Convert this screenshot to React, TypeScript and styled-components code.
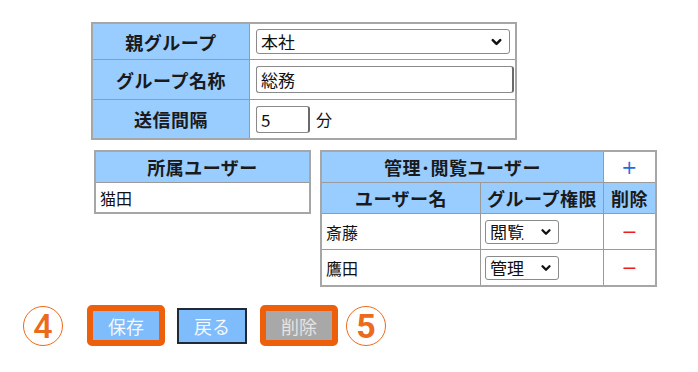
import React from "react";
import styled, { createGlobalStyle } from "styled-components";
import { ChevronDown } from "lucide-react";

const GlobalStyle = createGlobalStyle`
  html, body {
    margin: 0;
    padding: 0;
    background: #ffffff;
  }
  body {
    font-family: "Noto Sans CJK JP", "Noto Sans", sans-serif;
    color: #111;
  }
`;

const Page = styled.div`
  width: 698px;
  height: 372px;
  padding: 22px 0 0 91px;
  box-sizing: border-box;
`;

const FormTable = styled.table`
  border-collapse: collapse;
  border: 2px solid #a6a6a6;
  width: 426px;
`;

const LabelCell = styled.th<{ $h: number }>`
  width: 156px;
  height: ${(p) => p.$h}px;
  padding: 0;
  background: #99ccff;
  border: 1px solid #9a9a9a;
  font-size: 18px;
  letter-spacing: 0.5px;
  font-weight: bold;
  line-height: 1;
  color: #1a1a1a;
  text-align: center;
`;

const ValueCell = styled.td`
  padding: 0 0 0 6px;
  border: 1px solid #9a9a9a;
  font-size: 16px;
  line-height: 1;
`;

const SelectWrap = styled.div<{ $w: number }>`
  position: relative;
  width: ${(p) => p.$w}px;
  display: inline-block;
  vertical-align: middle;
`;

const Select = styled.select<{ $h: number }>`
  appearance: none;
  display: block;
  width: 100%;
  height: ${(p) => p.$h}px;
  box-sizing: border-box;
  border: 1px solid #8a8a8a;
  border-radius: 3px;
  background: #fff;
  padding: 0 0 0 4px;
  font-family: "Noto Sans CJK JP", sans-serif;
  font-size: 17px;
  line-height: 1;
  color: #111;
`;

const Chevron = styled(ChevronDown)`
  position: absolute;
  right: 6px;
  top: 50%;
  transform: translateY(-50%);
  pointer-events: none;
  color: #111;
`;

const TextInput = styled.input<{ $w: number }>`
  width: ${(p) => p.$w}px;
  height: 27px;
  box-sizing: border-box;
  border: 1px solid #8a8a8a;
  border-right: 2px solid #6a6a6a;
  border-radius: 3px;
  padding: 0 4px;
  font-family: "Noto Sans CJK JP", "Liberation Sans", sans-serif;
  font-size: 17px;
  color: #111;
  vertical-align: middle;
`;

const Unit = styled.span`
  margin-left: 6px;
  font-size: 16px;
  vertical-align: middle;
`;

const LowerRow = styled.div`
  display: flex;
  align-items: flex-start;
  gap: 9px;
  margin: 10px 0 0 3px;
`;

const ListTable = styled.table<{ $w: number }>`
  border-collapse: collapse;
  border: 2px solid #a6a6a6;
  width: ${(p) => p.$w}px;
`;

const HeadCell = styled.th<{ $h?: number; $w?: number; $plain?: boolean }>`
  height: ${(p) => p.$h ?? 30}px;
  width: ${(p) => (p.$w ? `${p.$w}px` : "auto")};
  padding: 0;
  background: ${(p) => (p.$plain ? "#ffffff" : "#99ccff")};
  border: 1px solid #9a9a9a;
  font-size: 18px;
  letter-spacing: 0.5px;
  font-weight: bold;
  line-height: 1;
  color: #1a1a1a;
  text-align: center;
  white-space: nowrap;
`;

const BodyCell = styled.td<{ $h: number; $center?: boolean }>`
  height: ${(p) => p.$h}px;
  padding: 0 0 0 ${(p) => (p.$center ? 0 : 4)}px;
  border: 1px solid #9a9a9a;
  font-size: 16px;
  line-height: 1;
  text-align: ${(p) => (p.$center ? "center" : "left")};
  white-space: nowrap;
`;

const Sign = styled.span<{ $color: string }>`
  color: ${(p) => p.$color};
  font-family: "DejaVu Sans", sans-serif;
  font-size: 19px;
  font-weight: normal;
  line-height: 1;
`;

const ButtonBar = styled.div`
  display: flex;
  align-items: center;
  margin: 18px 0 0 -68px;
`;

const Marker = styled.div<{ $bold?: boolean }>`
  width: 38px;
  height: 38px;
  border: 1.5px solid #ec6a1c;
  border-radius: 50%;
  display: flex;
  align-items: center;
  justify-content: center;
  color: #ec6a1c;
  font-family: Roboto, "Liberation Sans", sans-serif;
  font-size: 34px;
  font-weight: ${(p) => (p.$bold ? 700 : 500)};
  line-height: 1;
`;

const Highlight = styled.div`
  border: 6px solid #ee5f0c;
  border-radius: 5px;
  display: flex;
`;

const Button = styled.button<{ $tone: "blue" | "gray"; $framed?: boolean }>`
  width: ${(p) => (p.$framed ? 70 : 66)}px;
  height: ${(p) => (p.$framed ? 36 : 29)}px;
  box-sizing: border-box;
  border: ${(p) => (p.$framed ? "2px solid #1f2a36" : "none")};
  border-radius: 0;
  background: ${(p) => (p.$tone === "blue" ? "#7fbcfb" : "#a8a8a8")};
  color: ${(p) => (p.$tone === "blue" ? "#f4f8ff" : "#e4e4e4")};
  font-family: "Noto Sans CJK JP", sans-serif;
  font-size: 18px;
  line-height: 1;
  padding: 0;
`;

const Spacer = styled.div<{ $w: number }>`
  width: ${(p) => p.$w}px;
  flex: none;
`;

const members = [
  { name: "斎藤", role: "閲覧" },
  { name: "鷹田", role: "管理" },
];

export default function App() {
  return (
    <>
      <GlobalStyle />
      <Page>
        <FormTable>
          <tbody>
            <tr>
              <LabelCell $h={35}>親グループ</LabelCell>
              <ValueCell>
                <SelectWrap $w={254}>
                  <Select $h={25} defaultValue="本社">
                    <option>本社</option>
                  </Select>
                  <Chevron size={15} strokeWidth={4} />
                </SelectWrap>
              </ValueCell>
            </tr>
            <tr>
              <LabelCell $h={39}>グループ名称</LabelCell>
              <ValueCell>
                <TextInput $w={258} defaultValue="総務" />
              </ValueCell>
            </tr>
            <tr>
              <LabelCell $h={38}>送信間隔</LabelCell>
              <ValueCell>
                <TextInput $w={54} defaultValue="5" />
                <Unit>分</Unit>
              </ValueCell>
            </tr>
          </tbody>
        </FormTable>

        <LowerRow>
          <ListTable $w={217}>
            <tbody>
              <tr>
                <HeadCell $h={30}>所属ユーザー</HeadCell>
              </tr>
              <tr>
                <BodyCell $h={29}>猫田</BodyCell>
              </tr>
            </tbody>
          </ListTable>

          <ListTable $w={337}>
            <tbody>
              <tr>
                <HeadCell $h={30} colSpan={2}>
                  管理･閲覧ユーザー
                </HeadCell>
                <HeadCell $plain>
                  <Sign $color="#1a6fe0">+</Sign>
                </HeadCell>
              </tr>
              <tr>
                <HeadCell $h={30} $w={158}>
                  ユーザー名
                </HeadCell>
                <HeadCell $w={122}>グループ権限</HeadCell>
                <HeadCell>削除</HeadCell>
              </tr>
              {members.map((m) => (
                <tr key={m.name}>
                  <BodyCell $h={35}>{m.name}</BodyCell>
                  <BodyCell $h={35}>
                    <SelectWrap $w={74}>
                      <Select $h={24} defaultValue={m.role}>
                        <option>閲覧</option>
                        <option>管理</option>
                      </Select>
                      <Chevron size={14} strokeWidth={4} />
                    </SelectWrap>
                  </BodyCell>
                  <BodyCell $h={35} $center>
                    <Sign $color="#ee1c1c">−</Sign>
                  </BodyCell>
                </tr>
              ))}
            </tbody>
          </ListTable>
        </LowerRow>

        <ButtonBar>
          <Marker>4</Marker>
          <Spacer $w={24} />
          <Highlight>
            <Button $tone="blue">保存</Button>
          </Highlight>
          <Spacer $w={12} />
          <Button $tone="blue" $framed>
            戻る
          </Button>
          <Spacer $w={13} />
          <Highlight>
            <Button $tone="gray">削除</Button>
          </Highlight>
          <Spacer $w={8} />
          <Marker $bold>5</Marker>
        </ButtonBar>
      </Page>
    </>
  );
}
